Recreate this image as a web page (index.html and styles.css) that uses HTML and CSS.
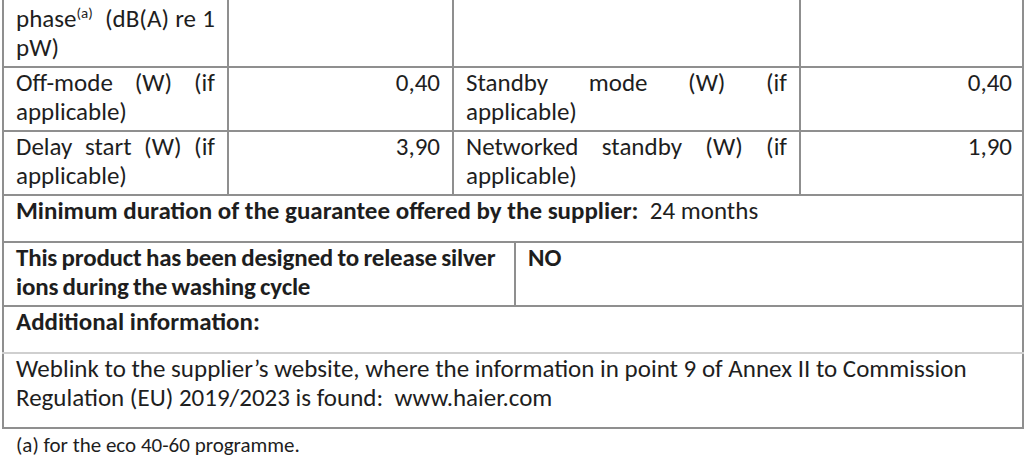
FILE: index.html
```html
<!DOCTYPE html>
<html lang="en">
<head>
<meta charset="utf-8">
<title>Product information sheet</title>
<link rel="stylesheet" href="styles.css">
</head>
<body>
<div class="sheet">
  <table class="grid">
    <colgroup>
      <col class="c1"><col class="c2"><col class="c3"><col class="c4">
    </colgroup>
    <tr class="first">
      <td class="label">phase<sup>(a)</sup> (dB(A) re 1 pW)</td>
      <td class="num"></td>
      <td class="label"></td>
      <td class="num"></td>
    </tr>
    <tr>
      <td class="label">Off-mode (W) (if applicable)</td>
      <td class="num">0,40</td>
      <td class="label">Standby mode (W) (if applicable)</td>
      <td class="num">0,40</td>
    </tr>
    <tr>
      <td class="label">Delay start (W) (if applicable)</td>
      <td class="num">3,90</td>
      <td class="label">Networked standby (W) (if applicable)</td>
      <td class="num">1,90</td>
    </tr>
  </table>
  <table class="grid lower">
    <colgroup>
      <col class="h1"><col class="h2">
    </colgroup>
    <tr>
      <td colspan="2" class="spaced"><b>Minimum duration of the guarantee offered by the supplier:</b>&nbsp; 24 months</td>
    </tr>
    <tr>
      <td class="bold tight">This product has been designed to release silver ions during the washing cycle</td>
      <td class="bold">NO</td>
    </tr>
    <tr>
      <td colspan="2" class="bold spaced head">Additional information:</td>
    </tr>
    <tr>
      <td colspan="2" class="spaced link">Weblink to the supplier’s website, where the information in point 9 of Annex II to Commission Regulation (EU) 2019/2023 is found:&nbsp; www.haier.com</td>
    </tr>
  </table>
  <p class="note">(a) for the eco 40-60 programme.</p>
</div>
</body>
</html>
```

FILE: styles.css
```css
html, body {
  margin: 0;
  padding: 0;
  background: #ffffff;
}

body {
  font-family: "Carlito", "Calibri", "Lato", sans-serif;
  font-size: 25px;
  line-height: 29px;
  color: #1e1e1e;
}

.sheet {
  padding-left: 2px;
  width: 1020px;
}

.grid {
  width: 1020px;
  border-collapse: collapse;
  table-layout: fixed;
}

.grid td {
  border: 2px solid #8f8f8f;
  padding: 0 12px 4px 12px;
  vertical-align: top;
}

.c1 { width: 225px; }
.c2 { width: 225px; }
.c3 { width: 347px; }
.c4 { width: 223px; }

.h1 { width: 512px; }
.h2 { width: 508px; }

.first td {
  border-top: none;
  padding-top: 4px;
}

.label {
  text-align: justify;
}

.num {
  text-align: right;
}

.grid td.num:last-child {
  padding-right: 10px;
}

sup {
  font-size: 15px;
  line-height: 0;
  vertical-align: 9px;
  margin-right: 6px;
}

.lower td {
  border-top: none;
}

.lower td.spaced {
  padding-bottom: 16px;
}

.bold {
  font-weight: bold;
}

.tight {
  letter-spacing: -0.2px;
  word-spacing: -1px;
}

.lower tr + tr td {
  border-top: 2px solid #8f8f8f;
}

.lower td.head {
  border-bottom: 2px solid #cfcfcf;
}

.lower td.link {
  border-top: 2px solid #cfcfcf;
  padding-bottom: 15px;
}

.note {
  margin: 0;
  padding: 4px 0 0 14px;
  font-size: 21px;
  line-height: 24px;
}
```
